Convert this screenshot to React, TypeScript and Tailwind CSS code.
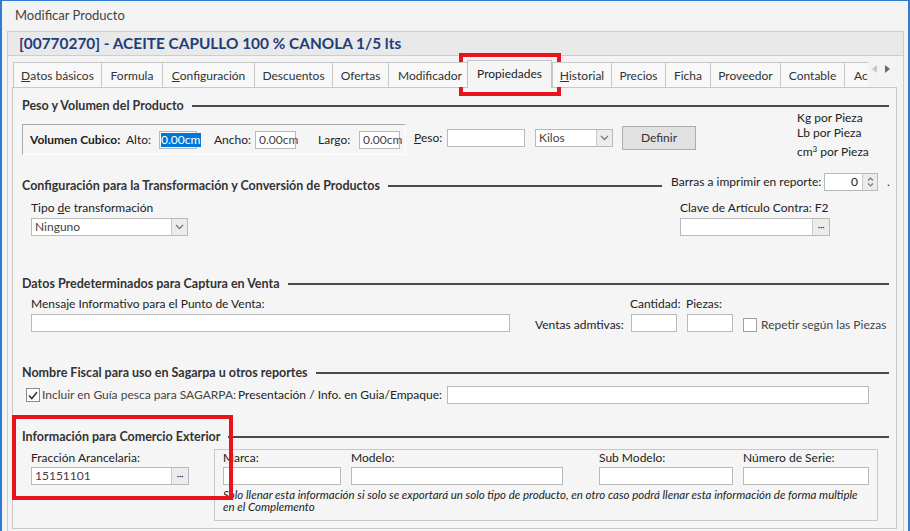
import React from "react";

const Box = ({ className = "", children }: { className?: string; children?: React.ReactNode }) => (
  <div className={`h-[18px] bg-white border border-[#b9b9b9] flex items-center shrink-0 ${className}`}>{children}</div>
);

const Chevron = () => (
  <svg width="9" height="6" viewBox="0 0 9 6"><path d="M1 1 L4.5 4.5 L8 1" fill="none" stroke="#7a7a7a" strokeWidth="1.3" /></svg>
);

const Select = ({ className = "", value }: { className?: string; value: string }) => (
  <Box className={className}>
    <span className="flex-1 pl-[3px] text-[#444] text-[12px]">{value}</span>
    <div className="w-[16px] h-full border-l border-[#c9c9c9] bg-[#ececec] flex items-center justify-center"><Chevron /></div>
  </Box>
);

const Dots = () => (
  <div className="w-[17px] h-full border-l border-[#c9c9c9] bg-[#ececec] flex items-center justify-center text-[10px] leading-none text-[#333] tracking-[-0.5px] pb-[3px]">···</div>
);

const Heading = ({ children, className = "" }: { children: React.ReactNode; className?: string }) => (
  <div className={`flex items-center h-[18px] ${className}`}>
    <span className="font-bold text-[12.5px] text-[#333] whitespace-nowrap">{children}</span>
    <div className="flex-1 h-[2px] bg-[#4a4a4a] ml-[8px]" />
  </div>
);

const tabs: { label: React.ReactNode; w: string; sel?: boolean }[] = [
  { label: <><span className="underline">D</span>atos básicos</>, w: "w-[88px]" },
  { label: "Formula", w: "w-[61px]" },
  { label: <><span className="underline">C</span>onfiguración</>, w: "w-[92px]" },
  { label: "Descuentos", w: "w-[78px]" },
  { label: "Ofertas", w: "w-[56px]" },
  { label: "Modificador", w: "w-[80px]" },
  { label: "Propiedades", w: "w-[85px]", sel: true },
  { label: <><span className="underline">H</span>istorial</>, w: "w-[59px]" },
  { label: "Precios", w: "w-[54px]" },
  { label: "Ficha", w: "w-[45px]" },
  { label: "Proveedor", w: "w-[70px]" },
  { label: "Contable", w: "w-[64px]" },
  { label: "Ac", w: "w-[40px]" },
];

export default function App() {
  return (
    <div className="w-[910px] h-[531px] overflow-hidden relative bg-[#f3f3f3] border-t border-l-2 border-r-2 border-[#2f7bd0] flex flex-col [font-family:Lato,'Noto_Sans',sans-serif] text-[12px] text-[#222]">
      {/* title */}
      <div className="h-[30px] shrink-0 flex items-center pl-[13px] text-[13px] text-[#444]">Modificar Producto</div>

      {/* frame */}
      <div className="ml-[5px] mr-[4px] flex-1 border-l border-r border-[#cdcdcd] flex flex-col">
        <div className="h-[25px] shrink-0 border-t border-b border-[#cdcdcd] bg-[#e9e9e9] pl-[11px] flex items-center pt-[1px]">
          <span className="font-bold text-[15.4px] text-[#1f3d7a]">[00770270] - ACEITE CAPULLO 100 % CANOLA 1/5 lts</span>
        </div>

        <div className="pl-[4px] pr-[6px] pt-[4px] flex flex-col">
          {/* tab strip */}
          <div className="flex items-start h-[28px] -mb-[1px] relative z-10">
            <div className="ml-[1px] w-[855px] h-[28px] overflow-hidden flex items-end">
              {tabs.map((t, i) =>
                t.sel ? (
                  <div key={i} className={`${t.w} shrink-0 h-[28px] -ml-[1px] bg-[#f5f5f5] border-t border-l border-r border-[#c4c4c4] flex items-center justify-center pb-[1px] text-[#222] relative z-10`}>
                    {t.label}
                  </div>
                ) : (
                  <div key={i} className={`${t.w} shrink-0 h-[25px] mb-[1px] bg-[#f8f8f8] border-t border-l border-[#c8c8c8] ${i === 5 || i === 12 ? "justify-start pl-[9px]" : "justify-center"} flex items-center pt-[1px] text-[#333] whitespace-nowrap overflow-hidden`}>
                    {t.label}
                  </div>
                )
              )}
            </div>
            <div className="flex items-center gap-[8px] ml-[4px] mt-[5px]">
              <svg width="5" height="8" viewBox="0 0 5 8"><path d="M5 0 L0 4 L5 8 Z" fill="#c8c8c8" /></svg>
              <svg width="5" height="8" viewBox="0 0 5 8"><path d="M0 0 L5 4 L0 8 Z" fill="#6b6b6b" /></svg>
            </div>
          </div>

          {/* panel */}
          <div className="h-[442px] border border-[#c8c8c8] bg-[#f5f5f5] pl-[9px] pr-[7px] flex flex-col overflow-hidden">
            {/* Section 1 */}
            <Heading className="mt-[9px]">Peso y Volumen del Producto</Heading>
            <div className="flex items-start h-[44px]">
              <div className="mt-[9px] w-[384px] h-[31px] shrink-0 border-t border-l border-[#a9a9a9] border-r border-b border-r-white border-b-white flex items-center pl-[7px]">
                <span className="w-[96px] shrink-0 font-bold">Volumen Cubico:</span>
                <span className="w-[33px] shrink-0">Alto:</span>
                <Box className="w-[38px] pl-[1px]">
                  <span className="bg-[#0078d7] text-white leading-[14px] pr-[1px]">0.00cm</span>
                  <span className="w-[1px] h-[14px] bg-black" />
                </Box>
                <span className="ml-[17px] w-[41px] shrink-0">Ancho:</span>
                <Box className="w-[41px] pl-[3px] text-[#444]">0.00cm</Box>
                <span className="ml-[22px] w-[41px] shrink-0">Largo:</span>
                <Box className="w-[41px] pl-[3px] text-[#444]">0.00cm</Box>
              </div>
              <div className="mt-[11px] h-[24px] flex items-center">
                <span className="ml-[8px] w-[33px] shrink-0"><span className="underline">P</span>eso:</span>
                <Box className="w-[78px]" />
                <Select className="ml-[10px] w-[78px]" value="Kilos" />
                <div className="ml-[9px] w-[74px] h-[24px] bg-[#e1e1e1] border border-[#adadad] flex items-center justify-center text-[#333]">Definir</div>
              </div>
              <div className="ml-auto w-[92px] -mt-[5px] flex flex-col text-[#222]">
                <div className="h-[15px] leading-[15px]">Kg por Pieza</div>
                <div className="h-[15px] leading-[15px]">Lb por Pieza</div>
                <div className="h-[20px] leading-[24px]">cm<sup className="text-[8px]">3</sup> por Pieza</div>
              </div>
            </div>

            {/* Section 2 */}
            <div className="mt-[18px] flex items-center h-[18px]">
              <span className="font-bold text-[12.5px] text-[#333] whitespace-nowrap">Configuración para la Transformación y Conversión de Productos</span>
              <div className="flex-1 h-[2px] bg-[#4a4a4a] ml-[8px]" />
              <span className="ml-[9px] w-[153px] shrink-0 mb-[8px]">Barras a imprimir en reporte:</span>
              <Box className="w-[54px] mb-[8px]">
                <span className="flex-1 text-right pr-[4px]">0</span>
                <div className="w-[15px] h-full border-l border-[#c9c9c9] bg-[#ececec] flex flex-col items-center justify-center gap-[2px]">
                  <svg width="7" height="4" viewBox="0 0 7 4"><path d="M1 3.5 L3.5 1 L6 3.5" fill="none" stroke="#777" strokeWidth="1.2" /></svg>
                  <svg width="7" height="4" viewBox="0 0 7 4"><path d="M1 0.5 L3.5 3 L6 0.5" fill="none" stroke="#777" strokeWidth="1.2" /></svg>
                </div>
              </Box>
              <span className="w-[11px] shrink-0 pl-[9px] mb-[8px]">.</span>
            </div>
            <div className="flex items-start mt-[6px]">
              <div className="ml-[9px] flex flex-col">
                <div className="h-[14px] leading-[14px]">Tipo <span className="underline">d</span>e transformación</div>
                <Select className="mt-[3px] w-[157px]" value="Ninguno" />
              </div>
              <div className="ml-auto mr-[59px] flex flex-col">
                <div className="h-[14px] leading-[14px]">Clave de Artículo Contra: F2</div>
                <Box className="mt-[3px] w-[150px] justify-end"><Dots /></Box>
              </div>
            </div>

            {/* Section 3 */}
            <Heading className="mt-[39px]">Datos Predeterminados para Captura en Venta</Heading>
            <div className="mt-[4px] h-[14px] flex items-center leading-[14px]">
              <span className="ml-[9px] w-[599px] shrink-0">Mensaje Informativo para el Punto de Venta:</span>
              <span className="w-[56px] shrink-0">Cantidad:</span>
              <span>Piezas:</span>
            </div>
            <div className="mt-[3px] h-[18px] flex items-center">
              <Box className="ml-[9px] w-[479px]" />
              <span className="ml-[25px] w-[96px] shrink-0 mt-[3px]">Ventas admtivas:</span>
              <Box className="w-[46px]" />
              <Box className="ml-[10px] w-[46px]" />
              <div className="ml-[10px] w-[14px] h-[14px] mt-[4px] bg-white border border-[#a0a0a0] shrink-0" />
              <span className="ml-[4px] mt-[3px] text-[#444]">Repetir según las Piezas</span>
            </div>

            {/* Section 4 */}
            <Heading className="mt-[32px]">Nombre Fiscal para uso en Sagarpa u otros reportes</Heading>
            <div className="mt-[4px] h-[18px] flex items-center">
              <div className="ml-[4px] w-[14px] h-[14px] bg-white border border-[#8a8a8a] shrink-0 flex items-center justify-center">
                <svg width="10" height="9" viewBox="0 0 10 9"><path d="M1 4.5 L3.8 7.5 L9 1.2" fill="none" stroke="#333" strokeWidth="1.6" /></svg>
              </div>
              <span className="ml-[2px] w-[196px] shrink-0 text-[#444]">Incluir en Guía pesca para SAGARPA:</span>
              <span className="w-[209px] shrink-0">Presentación / Info. en Guia/Empaque:</span>
              <Box className="w-[422px]" />
            </div>

            {/* Section 5 */}
            <Heading className="mt-[24px]">Información para Comercio Exterior</Heading>
            <div className="mt-[3px] flex items-start">
              <div className="ml-[9px] w-[158px] shrink-0 flex flex-col">
                <div className="mt-[2px] h-[14px] leading-[14px]">Fracción Arancelaria:</div>
                <Box className="mt-[2px] w-[158px]">
                  <span className="flex-1 pl-[3px] text-[#4a3848]">15151101</span>
                  <Dots />
                </Box>
              </div>
              <div className="ml-[25px] w-[664px] h-[72px] shrink-0 border border-[#c8c8c8] pl-[8px] pt-[1px] flex flex-col">
                <div className="h-[14px] flex items-center leading-[14px]">
                  <span className="w-[128px] shrink-0">Marca:</span>
                  <span className="w-[248px] shrink-0">Modelo:</span>
                  <span className="w-[144px] shrink-0">Sub Modelo:</span>
                  <span>Número de Serie:</span>
                </div>
                <div className="mt-[2px] flex items-center">
                  <Box className="w-[118px]" />
                  <Box className="ml-[10px] w-[212px]" />
                  <Box className="ml-[36px] w-[134px]" />
                  <Box className="ml-[10px] w-[126px]" />
                </div>
                <div className="mt-[4px] italic text-[11.5px] leading-[12px] text-[#222] whitespace-nowrap">
                  Solo llenar esta información si solo se exportará un solo tipo de producto, en otro caso podrá llenar esta información de forma multiple
                  <br />
                  en el Complemento
                </div>
              </div>
            </div>
          </div>
        </div>
      </div>

      {/* red highlight rectangles */}
      <div className="absolute left-[457px] top-[52px] w-[102px] h-[43px] border-4 border-[#e8131b] pointer-events-none" />
      <div className="absolute left-[10px] top-[414px] w-[221px] h-[85px] border-4 border-[#e8131b] pointer-events-none" />
    </div>
  );
}
